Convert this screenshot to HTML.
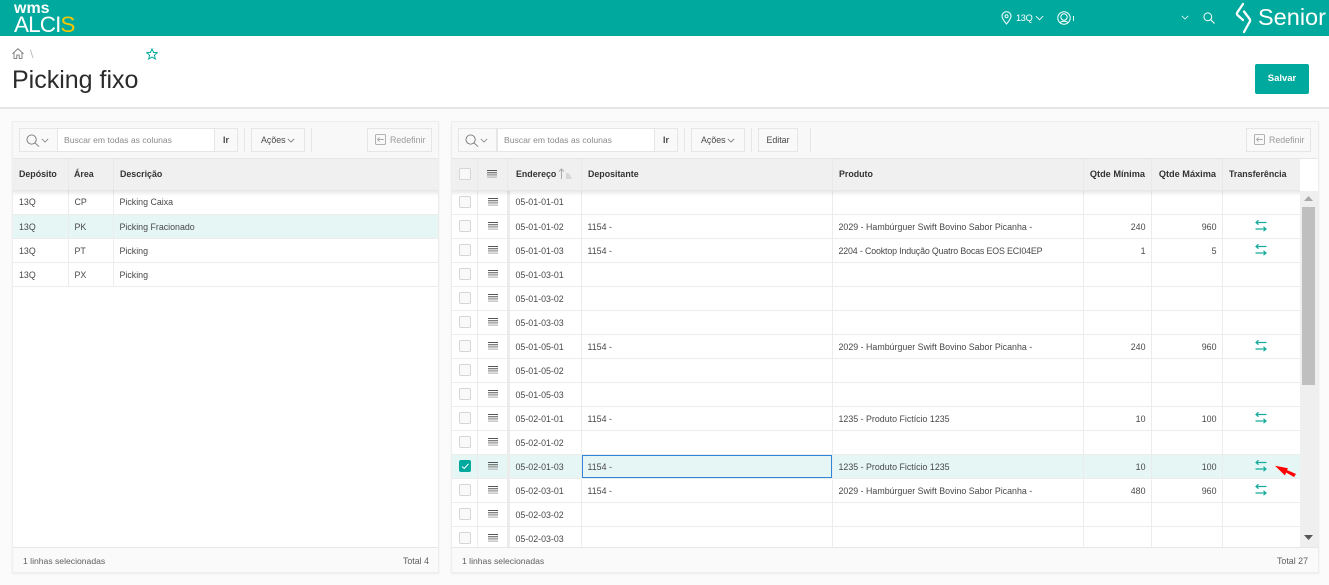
<!DOCTYPE html>
<html lang="pt-BR"><head><meta charset="utf-8"><title>Picking fixo</title>
<style>
*{box-sizing:border-box}
html,body{margin:0;padding:0}
body{width:1329px;height:585px;overflow:hidden;position:relative;background:#fbfbfb;font-family:"Liberation Sans",sans-serif;font-size:8.85px;color:#484848}
.a{position:absolute}
.top{left:0;top:0;width:1329px;height:36px;background:#00a99d;color:#fff}
.head{left:0;top:36px;width:1329px;height:73px;background:#fff;border-bottom:2px solid #e6e6e6}
.panel{top:121px;height:452px;background:#fff;border:1px solid #eee;box-shadow:0 1px 2px rgba(0,0,0,.07)}
.tb{left:0;top:0;right:0;height:37px;background:#f8f8f8;border-bottom:1px solid #e6e6e6}
.btn{top:128px;height:24px;border:1px solid #e6e6e6;background:#f9f9f9;line-height:23px;text-align:center;color:#484848}
.inp{top:128px;height:24px;border:1px solid #e6e6e6;background:#fff;line-height:23px;padding-left:6px;color:#8a8a8a;font-size:8.6px}
.sep{top:128px;width:1px;height:24px;background:#e6e6e6}
.hd{top:159px;height:31px;background:#f0f0f0}
.sh{top:190px;height:6px;background:linear-gradient(rgba(0,0,0,.1),rgba(0,0,0,0))}
.th{top:159px;height:31px;line-height:31px;font-weight:bold;color:#333;white-space:nowrap}
.vl{top:159px;width:1px;height:31px;background:#e9e9e9}
table{border-collapse:collapse;table-layout:fixed;position:absolute}
td{height:24px;padding:1px 6px 0;border-right:1px solid #ececec;border-bottom:1px solid #ececec;white-space:nowrap;overflow:hidden;text-align:left;vertical-align:middle}
td.r{text-align:right;padding-right:5px}
td.c{padding:0;text-align:center}
td.m{border-right:3px solid #ececec}
td.m svg{position:relative;left:1px}
tr.s td{background:#e6f6f4}
.cb{display:block;width:12px;height:12px;margin:0 auto;border:1px solid #d6d6d6;border-radius:2px;background:#f9f9f9}
td:first-child .cb{margin:0 0 0 7px}
.cb.on{background:#00a99d;border-color:#00a99d;position:relative}
svg{display:block}
svg.i{display:block;margin:0 auto}
.foot{height:25px;top:547px;background:#fafafa;border-top:1px solid #e6e6e6}
</style></head><body>
<svg width="0" height="0" style="position:absolute">
<symbol id="tr" viewBox="0 0 12 12"><path d="M11.500 2.500H1M3.500.3 1 2.500l2.500 2.200M.5 9H11M8.500 6.800 11 9l-2.500 2.200" fill="none" stroke="#14ac9f" stroke-width="1.200"/></symbol>
<symbol id="mn" viewBox="0 0 10 8"><path d="M0 .5h10M0 2.700h10" stroke="#555" stroke-width="1" fill="none"/><path d="M0 4.900h10" stroke="#777" stroke-width="1" fill="none"/><path d="M0 7.100h10" stroke="#aaa" stroke-width="1" fill="none"/></symbol>
<symbol id="mg" viewBox="0 0 15 14"><circle cx="6" cy="6" r="5" fill="none" stroke="#777" stroke-width="1"/><path d="M9.500 9.500 14 13.500" stroke="#777" stroke-width="1"/></symbol>
<symbol id="ch" viewBox="0 0 10 6"><path d="M1 1l4 4 4-4" fill="none" stroke="currentColor" stroke-width="1"/></symbol>
<symbol id="rd" viewBox="0 0 12 12"><rect x=".5" y=".5" width="11" height="11" rx="1.500" fill="none" stroke="#aaa"/><path d="M9.500 6H3M5 3.800 2.800 6 5 8.200" fill="none" stroke="#aaa"/></symbol>
</svg>

<div class="a top">
<div class="a" style="left:14px;top:0;font-size:16px;font-weight:bold;line-height:17px">wms</div>
<div class="a" style="left:14px;top:13px;font-size:22.500px;line-height:24px;letter-spacing:-.9px">ALCI<span style="color:#f7c600">S</span></div>
<svg class="a" style="left:1001px;top:11px" width="11" height="14" viewBox="0 0 11 14"><path d="M5.500 13C3 9.800 1 7.500 1 5.200a4.500 4.500 0 0 1 9 0C10 7.500 8 9.800 5.500 13z" fill="none" stroke="#e9fbf8" stroke-width="1.100"/><circle cx="5.500" cy="5.200" r="1.500" fill="none" stroke="#e9fbf8"/></svg>
<div class="a" style="left:1016px;top:12px;line-height:13px;font-size:9.200px;letter-spacing:-.3px">13Q</div>
<svg class="a" style="left:1035px;top:15px;color:#fff" width="9" height="6"><use href="#ch"/></svg>
<svg class="a" style="left:1057px;top:11px" width="14" height="14" viewBox="0 0 14 14"><circle cx="7" cy="7" r="6.200" fill="none" stroke="#fff" stroke-width="1"/><circle cx="7" cy="6" r="3.200" fill="none" stroke="#fff" stroke-width="1"/><path d="M3.500 11.500c1-1.600 6-1.600 7 0" fill="none" stroke="#fff"/></svg>
<div class="a" style="left:1073px;top:16px;width:1px;height:5px;background:#dff"></div>
<svg class="a" style="left:1181px;top:15px;color:#fff" width="8" height="5"><use href="#ch"/></svg>
<svg class="a" style="left:1203px;top:12px" width="12" height="12" viewBox="0 0 12 12"><circle cx="4.800" cy="4.800" r="3.900" fill="none" stroke="#fff"/><path d="M7.800 7.800 11.500 11.500" stroke="#fff" stroke-width="1.100"/></svg>
<svg class="a" style="left:1230px;top:0" width="30" height="36" viewBox="0 0 30 36"><path d="M13 4 7.300 12.500c-.6 1-.5 1.800.2 2.600L13 20M14 11.500l5.700 7.500c.6 1 .6 1.800 0 2.700L14 32" fill="none" stroke="#fff" stroke-width="2.300" stroke-linecap="round"/></svg>
<div class="a" style="left:1258px;top:4px;font-size:23.500px;line-height:27px;white-space:nowrap">Senior</div>
</div>

<div class="a head"></div>
<svg class="a" style="left:12px;top:48px" width="12" height="11" viewBox="0 0 12 11"><path d="M.5 5.800 6 .7l5.500 5.100M2 4.700v5.800h2.800V7h2.400v3.500H10V4.700" fill="none" stroke="#666" stroke-width=".8"/></svg>
<div class="a" style="left:30px;top:47px;color:#bbb;font-size:12px;line-height:14px">\</div>
<svg class="a" style="left:146px;top:48px" width="12" height="12" viewBox="0 0 12 12"><path d="M6 .9 7.500 4.400l3.800.3-2.900 2.500.9 3.800L6 9l-3.300 2 .9-3.800L.7 4.700l3.800-.3z" fill="none" stroke="#00a99d" stroke-width="1"/></svg>
<div class="a" style="left:12px;top:65px;font-size:25px;line-height:30px;color:#2b2b2b;white-space:nowrap">Picking fixo</div>
<div class="a" style="left:1255px;top:64px;width:54px;height:30px;background:#00a99d;border-radius:2px;color:#fff;font-weight:bold;text-align:center;line-height:30px;font-size:9.500px">Salvar</div>

<!-- Left panel -->
<div class="a panel" style="left:12px;width:427px"><div class="a tb"></div></div>
<div class="a btn" style="left:19px;width:39px"></div>
<svg class="a" style="left:26px;top:134px" width="14" height="13"><use href="#mg"/></svg>
<svg class="a" style="left:41px;top:138px;color:#777" width="8" height="5"><use href="#ch"/></svg>
<div class="a inp" style="left:57px;width:158px">Buscar em todas as colunas</div>
<div class="a btn" style="left:214px;width:24px;font-weight:bold">Ir</div>
<div class="a sep" style="left:244px"></div>
<div class="a btn" style="left:251px;width:54px;text-align:left;padding-left:9px">Ações</div>
<svg class="a" style="left:287px;top:138px;color:#666" width="8" height="5"><use href="#ch"/></svg>
<div class="a sep" style="left:311px"></div>
<div class="a btn" style="left:367px;width:65px;color:#9a9a9a;text-align:left;padding-left:22px">Redefinir</div>
<svg class="a" style="left:375px;top:134px" width="11" height="11"><use href="#rd"/></svg>

<div class="a hd" style="left:13px;width:425px"></div>
<div class="a vl" style="left:68px"></div><div class="a vl" style="left:113px"></div>
<div class="a th" style="left:19px">Depósito</div>
<div class="a th" style="left:74px">Área</div>
<div class="a th" style="left:120px">Descrição</div>
<table style="left:13px;top:190px;width:425px">
<colgroup><col style="width:55px"><col style="width:45px"><col style="width:325px"></colgroup>
<tr><td>13Q</td><td>CP</td><td>Picking Caixa</td></tr>
<tr class="s"><td>13Q</td><td>PK</td><td>Picking Fracionado</td></tr>
<tr><td>13Q</td><td>PT</td><td>Picking</td></tr>
<tr><td>13Q</td><td>PX</td><td>Picking</td></tr>
</table>
<div class="a sh" style="left:13px;width:425px"></div>
<div class="a foot" style="left:13px;width:425px"></div>
<div class="a" style="left:23px;top:555px;line-height:12px;color:#5e5e5e;font-size:8.600px">1 linhas selecionadas</div>
<div class="a" style="right:900px;top:555px;line-height:12px;color:#5e5e5e">Total 4</div>

<!-- Right panel -->
<div class="a panel" style="left:451px;width:868px"><div class="a tb"></div></div>
<div class="a btn" style="left:458px;width:39px"></div>
<svg class="a" style="left:465px;top:134px" width="14" height="13"><use href="#mg"/></svg>
<svg class="a" style="left:480px;top:138px;color:#777" width="8" height="5"><use href="#ch"/></svg>
<div class="a inp" style="left:497px;width:158px">Buscar em todas as colunas</div>
<div class="a btn" style="left:654px;width:24px;font-weight:bold">Ir</div>
<div class="a sep" style="left:684px"></div>
<div class="a btn" style="left:691px;width:54px;text-align:left;padding-left:9px">Ações</div>
<svg class="a" style="left:727px;top:138px;color:#666" width="8" height="5"><use href="#ch"/></svg>
<div class="a sep" style="left:751px"></div>
<div class="a btn" style="left:758px;width:40px">Editar</div>
<div class="a sep" style="left:810px"></div>
<div class="a btn" style="left:1246px;width:65px;color:#9a9a9a;text-align:left;padding-left:22px">Redefinir</div>
<svg class="a" style="left:1254px;top:134px" width="11" height="11"><use href="#rd"/></svg>

<div class="a hd" style="left:452px;width:848px"></div>
<div class="a" style="left:1300px;top:159px;width:18px;height:32px;background:#fff"></div>
<div class="a vl" style="left:477px"></div><div class="a vl" style="left:507px"></div><div class="a vl" style="left:581px"></div><div class="a vl" style="left:832px"></div><div class="a vl" style="left:1083px"></div><div class="a vl" style="left:1151px"></div><div class="a vl" style="left:1222px"></div>
<span class="a cb" style="left:459px;top:168px;margin:0"></span>
<svg class="a" style="left:487px;top:170px" width="10" height="8"><use href="#mn"/></svg>
<div class="a th" style="left:516px">Endereço</div>
<svg class="a" style="left:558px;top:168px" width="14" height="12" viewBox="0 0 14 12"><path d="M3.500 11V1M1 3.500 3.500 1 6 3.500" fill="none" stroke="#aaa"/><path d="M8 6h3M8 8h4.500M8 10h5.500" stroke="#aaa" stroke-width=".8"/></svg>
<div class="a th" style="left:588px">Depositante</div>
<div class="a th" style="left:839px">Produto</div>
<div class="a th" style="right:184px;font-size:9.200px">Qtde Mínima</div>
<div class="a th" style="right:113px;font-size:9.200px">Qtde Máxima</div>
<div class="a th" style="left:1229px">Transferência</div>

<div class="a" style="left:452px;top:191px;width:848px;height:356px;overflow:hidden">
<table style="left:0;top:-1px;width:848px">
<colgroup><col style="width:25px"><col style="width:31px"><col style="width:73px"><col style="width:251px"><col style="width:251px"><col style="width:68px"><col style="width:71px"><col style="width:78px"></colgroup>
<tr><td class="c"><span class="cb"></span></td><td class="c m"><svg class="i" width="10" height="8"><use href="#mn"/></svg></td><td>05-01-01-01</td><td></td><td></td><td></td><td></td><td></td></tr>
<tr><td class="c"><span class="cb"></span></td><td class="c m"><svg class="i" width="10" height="8"><use href="#mn"/></svg></td><td>05-01-01-02</td><td>1154 -</td><td>2029 - Hambúrguer Swift Bovino Sabor Picanha -</td><td class="r">240</td><td class="r">960</td><td class="c"><svg class="i" width="12" height="12"><use href="#tr"/></svg></td></tr>
<tr><td class="c"><span class="cb"></span></td><td class="c m"><svg class="i" width="10" height="8"><use href="#mn"/></svg></td><td>05-01-01-03</td><td>1154 -</td><td style="letter-spacing:-.15px">2204 - Cooktop Indução Quatro Bocas EOS ECI04EP</td><td class="r">1</td><td class="r">5</td><td class="c"><svg class="i" width="12" height="12"><use href="#tr"/></svg></td></tr>
<tr><td class="c"><span class="cb"></span></td><td class="c m"><svg class="i" width="10" height="8"><use href="#mn"/></svg></td><td>05-01-03-01</td><td></td><td></td><td></td><td></td><td></td></tr>
<tr><td class="c"><span class="cb"></span></td><td class="c m"><svg class="i" width="10" height="8"><use href="#mn"/></svg></td><td>05-01-03-02</td><td></td><td></td><td></td><td></td><td></td></tr>
<tr><td class="c"><span class="cb"></span></td><td class="c m"><svg class="i" width="10" height="8"><use href="#mn"/></svg></td><td>05-01-03-03</td><td></td><td></td><td></td><td></td><td></td></tr>
<tr><td class="c"><span class="cb"></span></td><td class="c m"><svg class="i" width="10" height="8"><use href="#mn"/></svg></td><td>05-01-05-01</td><td>1154 -</td><td>2029 - Hambúrguer Swift Bovino Sabor Picanha -</td><td class="r">240</td><td class="r">960</td><td class="c"><svg class="i" width="12" height="12"><use href="#tr"/></svg></td></tr>
<tr><td class="c"><span class="cb"></span></td><td class="c m"><svg class="i" width="10" height="8"><use href="#mn"/></svg></td><td>05-01-05-02</td><td></td><td></td><td></td><td></td><td></td></tr>
<tr><td class="c"><span class="cb"></span></td><td class="c m"><svg class="i" width="10" height="8"><use href="#mn"/></svg></td><td>05-01-05-03</td><td></td><td></td><td></td><td></td><td></td></tr>
<tr><td class="c"><span class="cb"></span></td><td class="c m"><svg class="i" width="10" height="8"><use href="#mn"/></svg></td><td>05-02-01-01</td><td>1154 -</td><td>1235 - Produto Fictício 1235</td><td class="r">10</td><td class="r">100</td><td class="c"><svg class="i" width="12" height="12"><use href="#tr"/></svg></td></tr>
<tr><td class="c"><span class="cb"></span></td><td class="c m"><svg class="i" width="10" height="8"><use href="#mn"/></svg></td><td>05-02-01-02</td><td></td><td></td><td></td><td></td><td></td></tr>
<tr class="s"><td class="c"><span class="cb on"><svg width="10" height="10" viewBox="0 0 10 10"><path d="M2 5.500 4.200 7.500 8.500 2.800" fill="none" stroke="#fff" stroke-width="1"/></svg></span></td><td class="c m"><svg class="i" width="10" height="8"><use href="#mn"/></svg></td><td>05-02-01-03</td><td>1154 -</td><td>1235 - Produto Fictício 1235</td><td class="r">10</td><td class="r">100</td><td class="c"><svg class="i" width="12" height="12"><use href="#tr"/></svg></td></tr>
<tr><td class="c"><span class="cb"></span></td><td class="c m"><svg class="i" width="10" height="8"><use href="#mn"/></svg></td><td>05-02-03-01</td><td>1154 -</td><td>2029 - Hambúrguer Swift Bovino Sabor Picanha -</td><td class="r">480</td><td class="r">960</td><td class="c"><svg class="i" width="12" height="12"><use href="#tr"/></svg></td></tr>
<tr><td class="c"><span class="cb"></span></td><td class="c m"><svg class="i" width="10" height="8"><use href="#mn"/></svg></td><td>05-02-03-02</td><td></td><td></td><td></td><td></td><td></td></tr>
<tr><td class="c"><span class="cb"></span></td><td class="c m"><svg class="i" width="10" height="8"><use href="#mn"/></svg></td><td>05-02-03-03</td><td></td><td></td><td></td><td></td><td></td></tr>
</table>
</div>
<div class="a sh" style="left:452px;width:848px"></div>
<div class="a" style="left:582px;top:455px;width:250px;height:23px;border:1px solid #2f86d6"></div>

<div class="a" style="left:1300px;top:191px;width:18px;height:356px;background:#efefef"></div>
<div class="a" style="left:1302px;top:207px;width:13px;height:178px;background:#bfbfbf"></div>
<svg class="a" style="left:1304px;top:196px" width="9" height="5"><path d="M4.500 0 9 5H0z" fill="#a8a8a8"/></svg>
<svg class="a" style="left:1304px;top:535px" width="9" height="5"><path d="M4.500 5 9 0H0z" fill="#555"/></svg>

<svg class="a" style="left:1274px;top:464px" width="24" height="14" viewBox="0 0 24 14"><path d="M1 1.700 14 4.300 13 6 22 10 20 13 12 8.500 11 11.500z" fill="#f00"/></svg>

<div class="a foot" style="left:452px;width:866px"></div>
<div class="a" style="left:462px;top:555px;line-height:12px;color:#5e5e5e;font-size:8.600px">1 linhas selecionadas</div>
<div class="a" style="right:21px;top:555px;line-height:12px;color:#5e5e5e">Total 27</div>
</body></html>
